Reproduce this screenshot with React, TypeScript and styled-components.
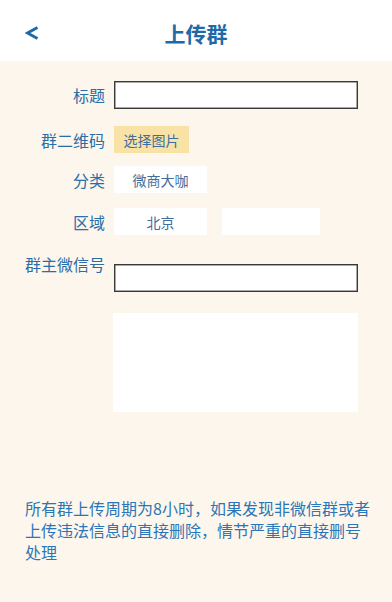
import React from "react";
import styled, { createGlobalStyle } from "styled-components";

const Global = createGlobalStyle`
  html, body { margin: 0; padding: 0; }
  body {
    background: #fdf6ec;
    font-family: "Noto Sans CJK SC", "Noto Sans", sans-serif;
    color: #2a6ea8;
  }
`;

const Page = styled.div`
  width: 392px;
  height: 602px;
  background: #fdf6ec;
  display: flex;
  flex-direction: column;
  overflow: hidden;
`;

const Header = styled.header`
  height: 61px;
  background: #ffffff;
  display: grid;
  grid-template-columns: 60px 1fr 60px;
  align-items: center;
  padding-top: 5px;
  box-sizing: border-box;
`;

const Back = styled.div`
  padding-left: 25px;
  display: flex;
  align-items: center;
`;

const Title = styled.h1`
  margin: 0;
  text-align: center;
  font-size: 21px;
  font-weight: 600;
  color: #1f6aa6;
`;

const Form = styled.div`
  display: flex;
  flex-direction: column;
  padding: 20px 0 0 0;
`;

const Row = styled.div<{ $top?: boolean; $mb: number }>`
  display: flex;
  align-items: ${(p) => (p.$top ? "flex-start" : "center")};
  margin-bottom: ${(p) => p.$mb}px;
`;

const Label = styled.div<{ $offset?: number }>`
  width: 114px;
  box-sizing: border-box;
  padding-right: 9px;
  text-align: right;
  font-size: 16px;
  line-height: 20px;
  color: #2a6ea8;
  margin-top: ${(p) => p.$offset ?? 0}px;
  white-space: nowrap;
`;

const TextInput = styled.div<{ $mt?: number }>`
  width: 244px;
  height: 28px;
  box-sizing: border-box;
  background: #fff;
  border: 1px solid #3a3a3a;
  box-shadow: inset 0 0 0 0.5px #555;
  margin-top: ${(p) => p.$mt ?? 0}px;
`;

const PickButton = styled.div`
  width: 75px;
  height: 27px;
  background: #f8e2a6;
  display: flex;
  align-items: center;
  justify-content: center;
  font-size: 14px;
  color: #3f6e9c;
`;

const SelectBox = styled.div<{ $w: number; $ml: number }>`
  margin-left: ${(p) => p.$ml}px;
  width: ${(p) => p.$w}px;
  height: 27px;
  background: #fff;
  display: flex;
  align-items: center;
  justify-content: center;
  font-size: 14px;
  color: #3f6e9c;
`;

const TextArea = styled.div`
  margin-left: 113px;
  width: 245px;
  height: 99px;
  background: #fff;
`;

const Notice = styled.p`
  margin: 85px 0 0 0;
  padding: 0 20px 0 25px;
  font-size: 16px;
  line-height: 22px;
  color: #2a76b8;
`;

export default function App() {
  return (
    <>
      <Global />
      <Page>
        <Header>
          <Back>
            <svg width="14" height="14" viewBox="0 0 14 14">
              <path d="M12.5 1.5 L2.5 7 L12.5 12.5" fill="none" stroke="#1f6aa6" strokeWidth="3" strokeLinejoin="miter" />
            </svg>
          </Back>
          <Title>上传群</Title>
          <div />
        </Header>
        <Form>
          <Row $mb={17}>
            <Label>标题</Label>
            <TextInput />
          </Row>
          <Row $mb={13}>
            <Label>群二维码</Label>
            <PickButton>选择图片</PickButton>
          </Row>
          <Row $mb={15}>
            <Label>分类</Label>
            <SelectBox $w={93} $ml={0}>微商大咖</SelectBox>
          </Row>
          <Row $mb={21}>
            <Label>区域</Label>
            <SelectBox $w={93} $ml={0}>北京</SelectBox>
            <SelectBox $w={98} $ml={15}></SelectBox>
          </Row>
          <Row $top $mb={21}>
            <Label $offset={-2}>群主微信号</Label>
            <TextInput $mt={8} />
          </Row>
          <TextArea />
        </Form>
        <Notice>所有群上传周期为8小时，如果发现非微信群或者上传违法信息的直接删除，情节严重的直接删号处理</Notice>
      </Page>
    </>
  );
}
